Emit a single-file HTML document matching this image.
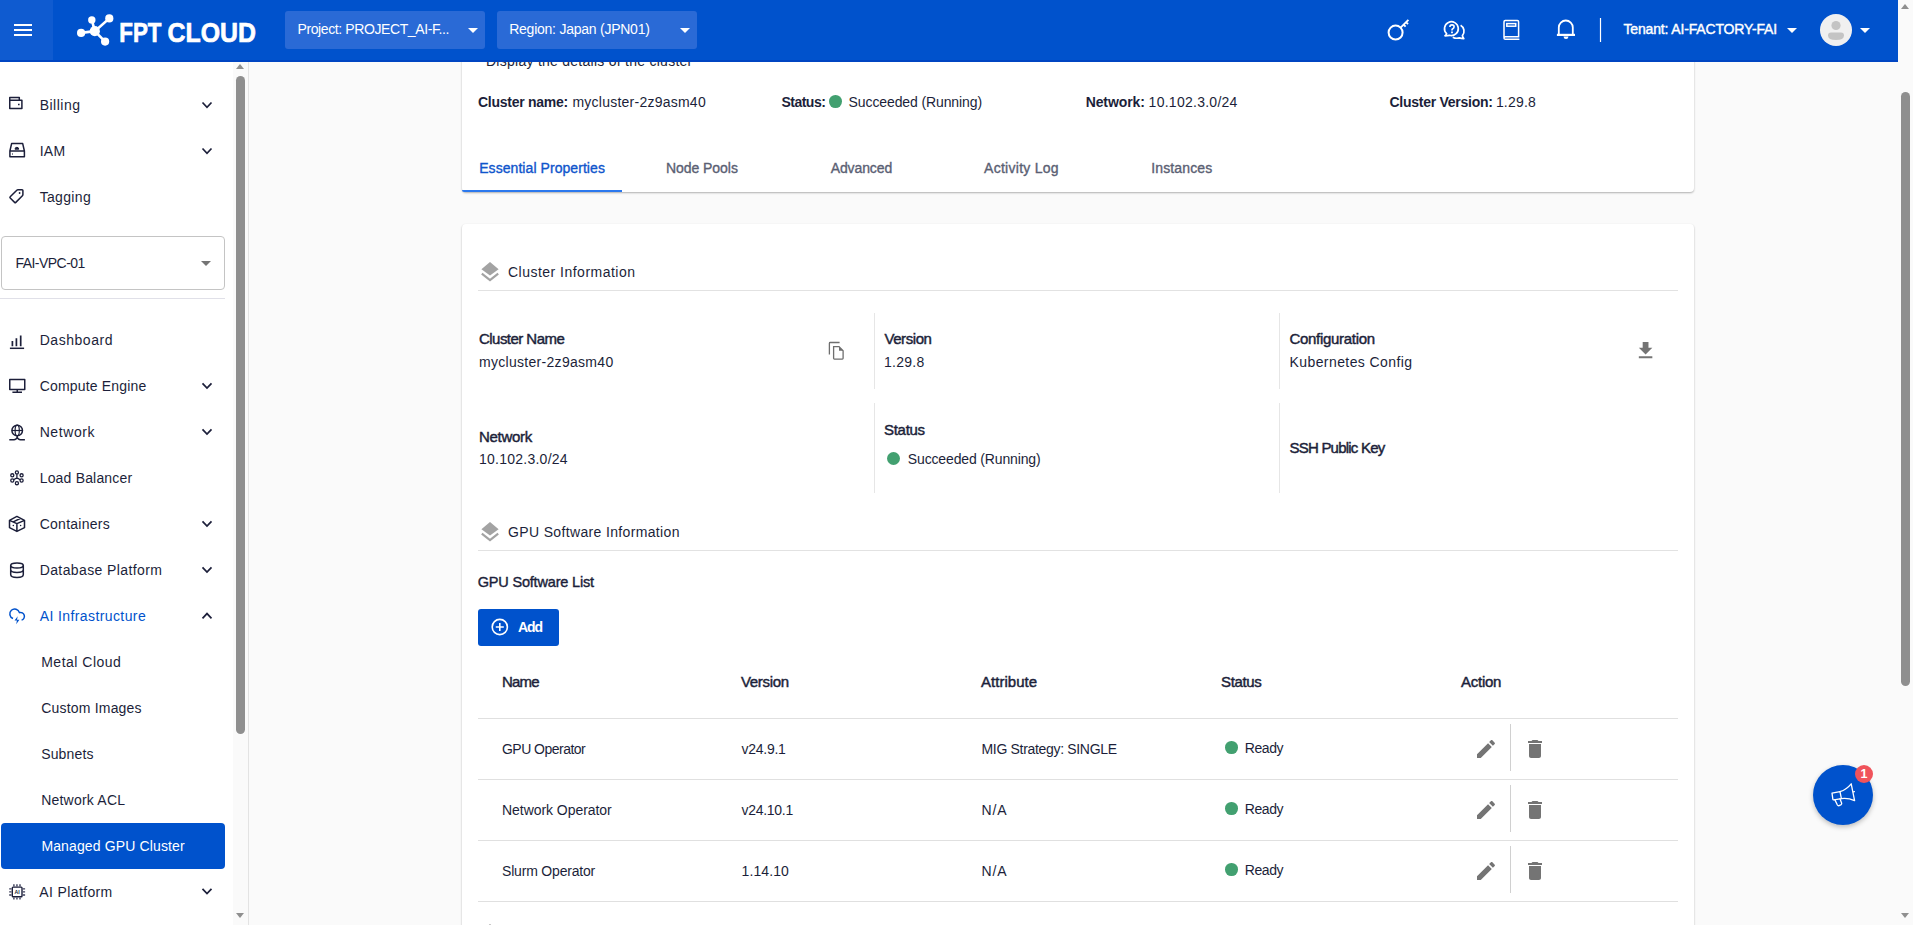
<!DOCTYPE html>
<html><head><meta charset="utf-8">
<style>
*{box-sizing:border-box}
html,body{margin:0;padding:0}
body{width:1913px;height:925px;overflow:hidden;position:relative;background:#fafafa;font-family:"Liberation Sans",sans-serif;color:#1c1f3a}
.a{position:absolute}
.nw{white-space:nowrap}
.card{position:absolute;background:#fff;border-radius:4px;box-shadow:0 1px 2px rgba(0,0,0,.3)}
</style></head>
<body>

<div class="card" style="left:462px;top:20px;width:1232px;height:172px"></div>
<div class="a nw" style="left:486px;top:52.75px;font-size:14px;line-height:16px;font-weight:normal;color:#1c1f3a;letter-spacing:0.261px;">Display the details of the cluster</div>
<div class="a nw" style="left:478px;top:94.25px;font-size:14px;line-height:16px;font-weight:bold;color:#1c1f3a;letter-spacing:-0.266px;">Cluster name:</div>
<div class="a nw" style="left:572.4px;top:94.25px;font-size:14px;line-height:16px;font-weight:normal;color:#1c1f3a;letter-spacing:0.243px;">mycluster-2z9asm40</div>
<div class="a nw" style="left:781.4px;top:94.25px;font-size:14px;line-height:16px;font-weight:bold;color:#1c1f3a;letter-spacing:-0.498px;">Status:</div>
<div class="a" style="left:829.1px;top:95.1px;width:12.8px;height:12.8px;border-radius:50%;background:#42a070"></div>
<div class="a nw" style="left:848.6px;top:94.25px;font-size:14px;line-height:16px;font-weight:normal;color:#1c1f3a;letter-spacing:-0.109px;">Succeeded (Running)</div>
<div class="a nw" style="left:1085.7px;top:94.25px;font-size:14px;line-height:16px;font-weight:bold;color:#1c1f3a;letter-spacing:-0.105px;">Network:</div>
<div class="a nw" style="left:1148.6px;top:94.25px;font-size:14px;line-height:16px;font-weight:normal;color:#1c1f3a;letter-spacing:0.263px;">10.102.3.0/24</div>
<div class="a nw" style="left:1389.5px;top:94.25px;font-size:14px;line-height:16px;font-weight:bold;color:#1c1f3a;letter-spacing:-0.267px;">Cluster Version:</div>
<div class="a nw" style="left:1495.9px;top:94.25px;font-size:14px;line-height:16px;font-weight:normal;color:#1c1f3a;letter-spacing:0.192px;">1.29.8</div>
<div class="a nw" style="left:479.2px;top:160.15px;font-size:14px;line-height:16px;font-weight:normal;color:#0f55cc;letter-spacing:0.063px;-webkit-text-stroke:0.35px #0f55cc">Essential Properties</div>
<div class="a nw" style="left:665.9px;top:160.15px;font-size:14px;line-height:16px;font-weight:normal;color:#5a6073;letter-spacing:-0.042px;-webkit-text-stroke:0.35px #5a6073">Node Pools</div>
<div class="a nw" style="left:830.7px;top:160.15px;font-size:14px;line-height:16px;font-weight:normal;color:#5a6073;letter-spacing:-0.112px;-webkit-text-stroke:0.35px #5a6073">Advanced</div>
<div class="a nw" style="left:984.1px;top:160.15px;font-size:14px;line-height:16px;font-weight:normal;color:#5a6073;letter-spacing:0.264px;-webkit-text-stroke:0.35px #5a6073">Activity Log</div>
<div class="a nw" style="left:1151.3px;top:160.15px;font-size:14px;line-height:16px;font-weight:normal;color:#5a6073;letter-spacing:0.122px;-webkit-text-stroke:0.35px #5a6073">Instances</div>
<div class="a" style="left:462px;top:190px;width:160px;height:2px;background:#2b78ee;border-bottom-left-radius:3px"></div>
<div class="card" style="left:462px;top:224px;width:1232px;height:760px"></div>
<svg class="a" style="left:480px;top:260px" width="20" height="22" viewBox="0 0 20 22"><path d="M10 2 L18.6 9.3 L10 15.4 L1.4 9.3 Z" fill="#a3a3a3"/><path d="M1.8 13.6 L10 20 L18.2 13.6" fill="none" stroke="#a3a3a3" stroke-width="2.2"/></svg>
<div class="a nw" style="left:508px;top:263.75px;font-size:14px;line-height:16px;font-weight:normal;color:#1c1f3a;letter-spacing:0.484px;">Cluster Information</div>
<div class="a" style="left:478px;top:290px;width:1200px;height:1px;background:#e2e2e2"></div>
<div class="a" style="left:874px;top:313px;width:1px;height:76px;background:#e6e6e6"></div>
<div class="a" style="left:874px;top:403px;width:1px;height:90px;background:#e6e6e6"></div>
<div class="a" style="left:1279px;top:313px;width:1px;height:76px;background:#e6e6e6"></div>
<div class="a" style="left:1279px;top:403px;width:1px;height:90px;background:#e6e6e6"></div>
<div class="a nw" style="left:479px;top:330.07px;font-size:15px;line-height:17px;font-weight:normal;color:#1c1f3a;letter-spacing:-0.541px;-webkit-text-stroke:0.45px #1c1f3a">Cluster Name</div>
<div class="a nw" style="left:479px;top:353.55px;font-size:14px;line-height:16px;font-weight:normal;color:#1c1f3a;letter-spacing:0.296px;">mycluster-2z9asm40</div>
<div class="a nw" style="left:884.4px;top:329.97px;font-size:15px;line-height:17px;font-weight:normal;color:#1c1f3a;letter-spacing:-0.415px;-webkit-text-stroke:0.45px #1c1f3a">Version</div>
<div class="a nw" style="left:884px;top:353.75px;font-size:14px;line-height:16px;font-weight:normal;color:#1c1f3a;letter-spacing:0.272px;">1.29.8</div>
<div class="a nw" style="left:1289.5px;top:329.77px;font-size:15px;line-height:17px;font-weight:normal;color:#1c1f3a;letter-spacing:-0.307px;-webkit-text-stroke:0.45px #1c1f3a">Configuration</div>
<div class="a nw" style="left:1289.5px;top:353.75px;font-size:14px;line-height:16px;font-weight:normal;color:#1c1f3a;letter-spacing:0.414px;">Kubernetes Config</div>
<div class="a nw" style="left:479px;top:427.87px;font-size:15px;line-height:17px;font-weight:normal;color:#1c1f3a;letter-spacing:-0.302px;-webkit-text-stroke:0.45px #1c1f3a">Network</div>
<div class="a nw" style="left:479px;top:451.25px;font-size:14px;line-height:16px;font-weight:normal;color:#1c1f3a;letter-spacing:0.246px;">10.102.3.0/24</div>
<div class="a nw" style="left:884px;top:420.67px;font-size:15px;line-height:17px;font-weight:normal;color:#1c1f3a;letter-spacing:-0.285px;-webkit-text-stroke:0.45px #1c1f3a">Status</div>
<div class="a" style="left:887px;top:452px;width:13px;height:13px;border-radius:50%;background:#42a070"></div>
<div class="a nw" style="left:907.8px;top:451.25px;font-size:14px;line-height:16px;font-weight:normal;color:#1c1f3a;letter-spacing:-0.142px;">Succeeded (Running)</div>
<div class="a nw" style="left:1289.5px;top:438.77px;font-size:15px;line-height:17px;font-weight:normal;color:#1c1f3a;letter-spacing:-0.783px;-webkit-text-stroke:0.45px #1c1f3a">SSH Public Key</div>
<svg class="a" style="left:820px;top:335px" width="30" height="30" viewBox="0 0 30 30"><path d="M9.4 19.5 V8.3 Q9.4 7.5 10.2 7.5 H19.6" fill="none" stroke="#6e6e6e" stroke-width="1.3"/><path d="M13.6 11.6 H19 L23.1 15.7 V23.3 Q23.1 24.1 22.3 24.1 H14.4 Q13.6 24.1 13.6 23.3 Z" fill="none" stroke="#6e6e6e" stroke-width="1.3"/><path d="M19 11.6 V15.7 H23.1 Z" fill="#6e6e6e"/></svg>
<svg class="a" style="left:1634.4px;top:339.2px" width="24" height="24" viewBox="0 0 24 24" ><path transform="scale(0.965)" d="M19 9h-4V3H9v6H5l7 7 7-7zM5 18v2h14v-2H5z" fill="#747474"/></svg>
<svg class="a" style="left:480px;top:520px" width="20" height="22" viewBox="0 0 20 22"><path d="M10 2 L18.6 9.3 L10 15.4 L1.4 9.3 Z" fill="#a3a3a3"/><path d="M1.8 13.6 L10 20 L18.2 13.6" fill="none" stroke="#a3a3a3" stroke-width="2.2"/></svg>
<div class="a nw" style="left:508px;top:524.45px;font-size:14px;line-height:16px;font-weight:normal;color:#1c1f3a;letter-spacing:0.352px;">GPU Software Information</div>
<div class="a" style="left:478px;top:550px;width:1200px;height:1px;background:#e2e2e2"></div>
<div class="a nw" style="left:477.7px;top:573.66px;font-size:14.5px;line-height:17px;font-weight:normal;color:#1c1f3a;letter-spacing:-0.183px;-webkit-text-stroke:0.4px #1c1f3a">GPU Software List</div>
<div class="a" style="left:478px;top:609px;width:81px;height:37px;background:#0052cc;border-radius:3px"></div>
<svg class="a" style="left:489px;top:617px" width="22" height="20" viewBox="0 0 22 20"><circle cx="10.8" cy="10" r="7.6" fill="none" stroke="#fff" stroke-width="1.6"/><path d="M10.8 6 V14 M6.8 10 H14.8" stroke="#fff" stroke-width="1.6"/></svg>
<div class="a nw" style="left:518px;top:619.25px;font-size:14px;line-height:16px;font-weight:bold;color:#fff;letter-spacing:-1.031px;">Add</div>
<div class="a nw" style="left:502px;top:672.97px;font-size:15px;line-height:17px;font-weight:normal;color:#1c1f3a;letter-spacing:-0.823px;-webkit-text-stroke:0.45px #1c1f3a">Name</div>
<div class="a nw" style="left:741px;top:672.97px;font-size:15px;line-height:17px;font-weight:normal;color:#1c1f3a;letter-spacing:-0.332px;-webkit-text-stroke:0.45px #1c1f3a">Version</div>
<div class="a nw" style="left:981px;top:672.97px;font-size:15px;line-height:17px;font-weight:normal;color:#1c1f3a;letter-spacing:0.023px;-webkit-text-stroke:0.45px #1c1f3a">Attribute</div>
<div class="a nw" style="left:1221px;top:672.97px;font-size:15px;line-height:17px;font-weight:normal;color:#1c1f3a;letter-spacing:-0.365px;-webkit-text-stroke:0.45px #1c1f3a">Status</div>
<div class="a nw" style="left:1461px;top:672.97px;font-size:15px;line-height:17px;font-weight:normal;color:#1c1f3a;letter-spacing:-0.249px;-webkit-text-stroke:0.45px #1c1f3a">Action</div>
<div class="a" style="left:478px;top:718px;width:1200px;height:1px;background:#e0e0e0"></div>
<div class="a" style="left:478px;top:779px;width:1200px;height:1px;background:#e0e0e0"></div>
<div class="a" style="left:478px;top:840px;width:1200px;height:1px;background:#e0e0e0"></div>
<div class="a" style="left:478px;top:901px;width:1200px;height:1px;background:#e0e0e0"></div>
<div class="a nw" style="left:502px;top:740.55px;font-size:14px;line-height:16px;font-weight:normal;color:#1c1f3a;letter-spacing:-0.528px;">GPU Operator</div>
<div class="a nw" style="left:741.6px;top:740.55px;font-size:14px;line-height:16px;font-weight:normal;color:#1c1f3a;letter-spacing:-0.273px;">v24.9.1</div>
<div class="a nw" style="left:981.5px;top:740.55px;font-size:14px;line-height:16px;font-weight:normal;color:#1c1f3a;letter-spacing:-0.319px;">MIG Strategy: SINGLE</div>
<div class="a" style="left:1225.2px;top:741.2px;width:12.6px;height:12.6px;border-radius:50%;background:#42a070"></div>
<div class="a nw" style="left:1244.8px;top:739.75px;font-size:14px;line-height:16px;font-weight:normal;color:#1c1f3a;letter-spacing:-0.417px;">Ready</div>
<svg class="a" style="left:1474px;top:736.6px" width="24" height="24" viewBox="0 0 24 24"><path d="M3 17.25V21h3.75L17.81 9.94l-3.75-3.75L3 17.25zM20.71 7.04c.39-.39.39-1.02 0-1.41l-2.34-2.34c-.39-.39-1.02-.39-1.41 0l-1.83 1.83 3.75 3.75 1.83-1.83z" fill="#747474"/></svg>
<div class="a" style="left:1510px;top:724.3px;width:1px;height:47px;background:#d0d0d0"></div>
<svg class="a" style="left:1522.9px;top:737.1px" width="24" height="24" viewBox="0 0 24 24"><path d="M6 19c0 1.1.9 2 2 2h8c1.1 0 2-.9 2-2V7H6v12zM19 4h-3.5l-1-1h-5l-1 1H5v2h14V4z" fill="#747474"/></svg>
<div class="a nw" style="left:502px;top:801.55px;font-size:14px;line-height:16px;font-weight:normal;color:#1c1f3a;letter-spacing:-0.048px;">Network Operator</div>
<div class="a nw" style="left:741.6px;top:801.55px;font-size:14px;line-height:16px;font-weight:normal;color:#1c1f3a;letter-spacing:-0.303px;">v24.10.1</div>
<div class="a nw" style="left:981.5px;top:801.55px;font-size:14px;line-height:16px;font-weight:normal;color:#1c1f3a;letter-spacing:0.9px;">N/A</div>
<div class="a" style="left:1225.2px;top:802.2px;width:12.6px;height:12.6px;border-radius:50%;background:#42a070"></div>
<div class="a nw" style="left:1244.8px;top:800.75px;font-size:14px;line-height:16px;font-weight:normal;color:#1c1f3a;letter-spacing:-0.417px;">Ready</div>
<svg class="a" style="left:1474px;top:797.6px" width="24" height="24" viewBox="0 0 24 24"><path d="M3 17.25V21h3.75L17.81 9.94l-3.75-3.75L3 17.25zM20.71 7.04c.39-.39.39-1.02 0-1.41l-2.34-2.34c-.39-.39-1.02-.39-1.41 0l-1.83 1.83 3.75 3.75 1.83-1.83z" fill="#747474"/></svg>
<div class="a" style="left:1510px;top:785.3px;width:1px;height:47px;background:#d0d0d0"></div>
<svg class="a" style="left:1522.9px;top:798.1px" width="24" height="24" viewBox="0 0 24 24"><path d="M6 19c0 1.1.9 2 2 2h8c1.1 0 2-.9 2-2V7H6v12zM19 4h-3.5l-1-1h-5l-1 1H5v2h14V4z" fill="#747474"/></svg>
<div class="a nw" style="left:502px;top:862.55px;font-size:14px;line-height:16px;font-weight:normal;color:#1c1f3a;letter-spacing:-0.187px;">Slurm Operator</div>
<div class="a nw" style="left:741.6px;top:862.55px;font-size:14px;line-height:16px;font-weight:normal;color:#1c1f3a;letter-spacing:0.079px;">1.14.10</div>
<div class="a nw" style="left:981.5px;top:862.55px;font-size:14px;line-height:16px;font-weight:normal;color:#1c1f3a;letter-spacing:0.9px;">N/A</div>
<div class="a" style="left:1225.2px;top:863.2px;width:12.6px;height:12.6px;border-radius:50%;background:#42a070"></div>
<div class="a nw" style="left:1244.8px;top:861.75px;font-size:14px;line-height:16px;font-weight:normal;color:#1c1f3a;letter-spacing:-0.417px;">Ready</div>
<svg class="a" style="left:1474px;top:858.6px" width="24" height="24" viewBox="0 0 24 24"><path d="M3 17.25V21h3.75L17.81 9.94l-3.75-3.75L3 17.25zM20.71 7.04c.39-.39.39-1.02 0-1.41l-2.34-2.34c-.39-.39-1.02-.39-1.41 0l-1.83 1.83 3.75 3.75 1.83-1.83z" fill="#747474"/></svg>
<div class="a" style="left:1510px;top:846.3px;width:1px;height:47px;background:#d0d0d0"></div>
<svg class="a" style="left:1522.9px;top:859.1px" width="24" height="24" viewBox="0 0 24 24"><path d="M6 19c0 1.1.9 2 2 2h8c1.1 0 2-.9 2-2V7H6v12zM19 4h-3.5l-1-1h-5l-1 1H5v2h14V4z" fill="#747474"/></svg>
<svg class="a" style="left:480px;top:922px" width="20" height="22" viewBox="0 0 20 22"><path d="M10 2 L18.6 9.3 L10 15.4 L1.4 9.3 Z" fill="#a3a3a3"/><path d="M1.8 13.6 L10 20 L18.2 13.6" fill="none" stroke="#a3a3a3" stroke-width="2.2"/></svg>
<div class="a" style="left:1813px;top:765px;width:60px;height:60px;border-radius:50%;background:#0052cc;box-shadow:0 2px 5px rgba(0,0,0,.25)"></div>
<svg class="a" style="left:1820px;top:775px" width="45" height="40" viewBox="1820 775 45 40"><g fill="none" stroke="#fff" stroke-width="1.3" stroke-linejoin="round" stroke-linecap="round"><path d="M1832 793.2 L1840 791.6 L1841.4 798.6 L1834 799.8 Q1832.9 800 1832.8 798.9 Z"/><path d="M1840 791.6 Q1846.5 789.6 1851.2 783.8 L1854.6 800.6 Q1848.2 797.8 1841.4 798.6"/><path d="M1834.8 799.6 L1837.4 805 Q1838 806 1839.2 805.6 L1841.2 804.6 Q1842 804 1841.6 803 L1840 798.9"/><path d="M1853.4 791.8 L1854.4 791.6"/></g></svg>
<div class="a" style="left:1855px;top:765px;width:18px;height:18px;border-radius:50%;background:#f0535b;color:#fff;font-size:12.5px;font-weight:bold;line-height:18px;text-align:center">1</div>
<div class="a" style="left:1898px;top:0;width:15px;height:925px;background:#fafafa"></div>
<div class="a" style="left:1901px;top:92px;width:9px;height:594px;border-radius:4.5px;background:#8f8f8f"></div>
<div class="a" style="left:1901px;top:4px;width:0;height:0;border-left:4.5px solid transparent;border-right:4.5px solid transparent;border-bottom:5px solid #8f8f8f"></div>
<div class="a" style="left:1901px;top:913px;width:0;height:0;border-left:4.5px solid transparent;border-right:4.5px solid transparent;border-top:5px solid #8f8f8f"></div>
<div class="a" style="left:0;top:62px;width:248px;height:863px;background:#fff"></div>
<div class="a" style="left:233px;top:62px;width:15px;height:863px;background:#fafafa"></div>
<div class="a" style="left:248px;top:62px;width:1px;height:863px;background:#e3e3e3"></div>
<div class="a" style="left:236px;top:76px;width:9px;height:658px;border-radius:4.5px;background:#8f8f8f"></div>
<div class="a" style="left:236px;top:64px;width:0;height:0;border-left:4.5px solid transparent;border-right:4.5px solid transparent;border-bottom:5px solid #8f8f8f"></div>
<div class="a" style="left:236px;top:913px;width:0;height:0;border-left:4.5px solid transparent;border-right:4.5px solid transparent;border-top:5px solid #8f8f8f"></div>
<svg class="a" style="left:0;top:84px" width="34" height="40" viewBox="0 0 34 40"><g fill="none" stroke="#1c1f3a" stroke-width="1.5" stroke-linejoin="round"><path d="M9.75 16.2 H21.9 V24.6 H9.75 Z M9.75 16.2 V13.6 H19.3 V16.2" /><path d="M18 20.6 H19.6"/></g></svg>
<div class="a nw" style="left:39.7px;top:96.95px;font-size:14px;line-height:16px;font-weight:normal;color:#1c1f3a;letter-spacing:0.489px;">Billing</div>
<svg class="a" style="left:0;top:0" width="220" height="925" ><path d="M202.5 102.5 L207 107.3 L211.5 102.5" fill="none" stroke="#1c1f3a" stroke-width="1.7"/></svg>
<svg class="a" style="left:0;top:130px" width="34" height="40" viewBox="0 0 34 40"><g fill="none" stroke="#1c1f3a" stroke-width="1.5" stroke-linejoin="round"><path d="M9.9 21 L11.6 13.6 H22.7 L24.4 21 V26.7 H9.9 Z M9.9 21 H24.4"/><path d="M12.3 24 H13"/><path d="M15 19.2 Q15 17.3 16.9 17.3 Q18.6 17.3 18.8 19.2 Z" fill="#1c1f3a" stroke-width="1"/></g></svg>
<div class="a nw" style="left:39.7px;top:142.95px;font-size:14px;line-height:16px;font-weight:normal;color:#1c1f3a;letter-spacing:0.236px;">IAM</div>
<svg class="a" style="left:0;top:0" width="220" height="925" ><path d="M202.5 148.5 L207 153.3 L211.5 148.5" fill="none" stroke="#1c1f3a" stroke-width="1.7"/></svg>
<svg class="a" style="left:0;top:176px" width="34" height="40" viewBox="0 0 34 40"><g fill="none" stroke="#1c1f3a" stroke-width="1.5" stroke-linejoin="round"><path d="M10.2 20.8 L16.8 14.2 Q17.3 13.7 18 13.7 H22.1 Q22.9 13.7 22.9 14.5 V18.6 Q22.9 19.3 22.4 19.8 L15.8 26.4 Q15.2 27 14.6 26.4 L10.2 22 Q9.6 21.4 10.2 20.8 Z"/><circle cx="19.6" cy="17" r="0.9" fill="#1c1f3a" stroke="none"/></g></svg>
<div class="a nw" style="left:39.7px;top:188.85px;font-size:14px;line-height:16px;font-weight:normal;color:#1c1f3a;letter-spacing:0.324px;">Tagging</div>
<div class="a" style="left:1px;top:236px;width:224px;height:54px;border:1px solid #c4c4c4;border-radius:4px"></div>
<div class="a nw" style="left:15.5px;top:254.95px;font-size:14px;line-height:16px;font-weight:normal;color:#1c1f3a;letter-spacing:-0.545px;">FAI-VPC-01</div>
<div class="a" style="left:201px;top:261px;width:0;height:0;border-left:5px solid transparent;border-right:5px solid transparent;border-top:5px solid #757575"></div>
<div class="a" style="left:0;top:298px;width:225px;height:1px;background:#e0e0e8"></div>
<svg class="a" style="left:0;top:320px" width="34" height="40" viewBox="0 0 34 40"><g fill="none" stroke="#1c1f3a" stroke-width="1.5" stroke-linejoin="round"><path d="M12.4 21 V26.2 M16.4 18.3 V26.2 M20.7 15.6 V26.2" stroke-width="1.7"/><path d="M9.9 28.3 H24.1" stroke-width="1.5"/></g></svg>
<div class="a nw" style="left:39.7px;top:331.75px;font-size:14px;line-height:16px;font-weight:normal;color:#1c1f3a;letter-spacing:0.537px;">Dashboard</div>
<svg class="a" style="left:0;top:366px" width="34" height="40" viewBox="0 0 34 40"><g fill="none" stroke="#1c1f3a" stroke-width="1.5" stroke-linejoin="round"><rect x="9.75" y="13.6" width="15" height="10" /><path d="M17.25 23.6 V26.2 M12.4 26.3 H22" /></g></svg>
<div class="a nw" style="left:39.7px;top:377.75px;font-size:14px;line-height:16px;font-weight:normal;color:#1c1f3a;letter-spacing:0.169px;">Compute Engine</div>
<svg class="a" style="left:0;top:0" width="220" height="925" ><path d="M202.5 383.3 L207 388.1 L211.5 383.3" fill="none" stroke="#1c1f3a" stroke-width="1.7"/></svg>
<svg class="a" style="left:0;top:412px" width="34" height="40" viewBox="0 0 34 40"><g fill="none" stroke="#1c1f3a" stroke-width="1.5" stroke-linejoin="round"><g transform="translate(0 -0.8)"><circle cx="17.2" cy="19.3" r="5.3"/><ellipse cx="17.2" cy="19.3" rx="2.1" ry="5.3" stroke-width="1.2"/><path d="M11.9 19.3 H22.5" stroke-width="1.2"/><path d="M17.2 24.6 V25.6 Q17.2 27 15.8 28 Q15.1 28.5 14 28.5 H9.3 M17.2 25.6 Q17.2 27 18.6 28 Q19.3 28.5 20.4 28.5 H24.9"/></g></svg>
<div class="a nw" style="left:39.7px;top:423.75px;font-size:14px;line-height:16px;font-weight:normal;color:#1c1f3a;letter-spacing:0.576px;">Network</div>
<svg class="a" style="left:0;top:0" width="220" height="925" ><path d="M202.5 429.3 L207 434.1 L211.5 429.3" fill="none" stroke="#1c1f3a" stroke-width="1.7"/></svg>
<svg class="a" style="left:0;top:458px" width="34" height="40" viewBox="0 0 34 40"><g fill="none" stroke="#1c1f3a" stroke-width="1.5" stroke-linejoin="round"><g stroke-width="1.3"><circle cx="16.9" cy="14.4" r="1.55"/><circle cx="12.3" cy="17.3" r="1.55"/><circle cx="21.6" cy="17.3" r="1.55"/><circle cx="12.3" cy="22.5" r="1.55"/><circle cx="21.6" cy="22.5" r="1.55"/><circle cx="16.9" cy="25.2" r="1.55"/><path d="M16.9 16 V20.2 Q15.5 20.3 13.7 21.7 M16.9 20.2 Q18.3 20.3 20.1 21.7"/></g></g></svg>
<div class="a nw" style="left:39.7px;top:469.75px;font-size:14px;line-height:16px;font-weight:normal;color:#1c1f3a;letter-spacing:0.181px;">Load Balancer</div>
<svg class="a" style="left:0;top:504px" width="34" height="40" viewBox="0 0 34 40"><g fill="none" stroke="#1c1f3a" stroke-width="1.5" stroke-linejoin="round"><path d="M16.9 12.4 L24.5 16.4 V23.6 L16.9 27.4 L9.5 23.6 V16.4 Z M9.5 16.4 L16.9 19.6 L24.5 16.4 M16.9 19.6 V27.4 M13.2 17.9 L20.7 14.3"/><circle cx="13.3" cy="21.6" r="0.75" fill="#1c1f3a" stroke="none"/><circle cx="20.6" cy="21.6" r="0.75" fill="#1c1f3a" stroke="none"/></g></svg>
<div class="a nw" style="left:39.7px;top:515.75px;font-size:14px;line-height:16px;font-weight:normal;color:#1c1f3a;letter-spacing:0.255px;">Containers</div>
<svg class="a" style="left:0;top:0" width="220" height="925" ><path d="M202.5 521.3 L207 526.1 L211.5 521.3" fill="none" stroke="#1c1f3a" stroke-width="1.7"/></svg>
<svg class="a" style="left:0;top:550px" width="34" height="40" viewBox="0 0 34 40"><g fill="none" stroke="#1c1f3a" stroke-width="1.5" stroke-linejoin="round"><ellipse cx="17" cy="15.5" rx="6.3" ry="2.5"/><path d="M10.7 15.5 V24.4 Q10.7 27.4 17 27.4 Q23.3 27.4 23.3 24.4 V15.5 M10.7 19.8 Q10.7 22.5 17 22.5 Q23.3 22.5 23.3 19.8"/></g></svg>
<div class="a nw" style="left:39.7px;top:561.75px;font-size:14px;line-height:16px;font-weight:normal;color:#1c1f3a;letter-spacing:0.389px;">Database Platform</div>
<svg class="a" style="left:0;top:0" width="220" height="925" ><path d="M202.5 567.3 L207 572.1 L211.5 567.3" fill="none" stroke="#1c1f3a" stroke-width="1.7"/></svg>
<svg class="a" style="left:0;top:596px" width="34" height="40" viewBox="0 0 34 40"><g fill="none" stroke="#1c1f3a" stroke-width="1.5" stroke-linejoin="round"><path d="M13.0 22.5 A4.9 4.9 0 1 1 19.43 16.63 A3.85 3.85 0 1 1 21.6 24.1" stroke="#0052cc" stroke-width="1.5"/><path d="M17.7 20.2 L14.5 24.5 H16.9 L16.2 28.3 L19.4 23.8 H17 Z" fill="#0052cc" stroke="none"/></g></svg>
<div class="a nw" style="left:39.7px;top:607.75px;font-size:14px;line-height:16px;font-weight:normal;color:#0052cc;letter-spacing:0.4px;">AI Infrastructure</div>
<svg class="a" style="left:0;top:0" width="220" height="925" ><path d="M202.5 618.4 L207 613.6 L211.5 618.4" fill="none" stroke="#1c1f3a" stroke-width="1.7"/></svg>
<div class="a nw" style="left:41.2px;top:653.75px;font-size:14px;line-height:16px;font-weight:normal;color:#1c1f3a;letter-spacing:0.498px;">Metal Cloud</div>
<div class="a nw" style="left:41.2px;top:699.75px;font-size:14px;line-height:16px;font-weight:normal;color:#1c1f3a;letter-spacing:0.197px;">Custom Images</div>
<div class="a nw" style="left:41.2px;top:745.75px;font-size:14px;line-height:16px;font-weight:normal;color:#1c1f3a;letter-spacing:0.155px;">Subnets</div>
<div class="a nw" style="left:41.2px;top:791.75px;font-size:14px;line-height:16px;font-weight:normal;color:#1c1f3a;letter-spacing:0.212px;">Network ACL</div>
<div class="a" style="left:1px;top:823px;width:224px;height:46px;border-radius:4px;background:#0052cc"></div>
<div class="a nw" style="left:41.4px;top:837.75px;font-size:14px;line-height:16px;font-weight:normal;color:#fff;letter-spacing:0.135px;">Managed GPU Cluster</div>
<svg class="a" style="left:0;top:871px" width="34" height="40" viewBox="0 0 34 40"><g fill="none" stroke="#1c1f3a" stroke-width="1.5" stroke-linejoin="round"><rect x="12.3" y="16.1" width="9.7" height="9.7" rx="0.8" stroke-width="1.4"/><path d="M13.9 13.3 V15.4 M16.95 13.3 V15.4 M20 13.3 V15.4 M13.9 26.5 V28.6 M16.95 26.5 V28.6 M20 26.5 V28.6 M9.2 17.9 H11.5 M9.2 20.9 H11.5 M9.2 24 H11.5 M22.8 17.9 H25.1 M22.8 20.9 H25.1 M22.8 24 H25.1" stroke-width="1.4" stroke="#3a3d58"/><text x="17.2" y="22.7" font-size="5.2" font-family="Liberation Sans" font-weight="bold" fill="#1c1f3a" stroke="none" text-anchor="middle">AI</text></g></svg>
<div class="a nw" style="left:39.3px;top:883.75px;font-size:14px;line-height:16px;font-weight:normal;color:#1c1f3a;letter-spacing:0.372px;">AI Platform</div>
<svg class="a" style="left:0;top:0" width="220" height="925" ><path d="M202.5 888.8 L207 893.6 L211.5 888.8" fill="none" stroke="#1c1f3a" stroke-width="1.7"/></svg>
<div class="a" style="left:0;top:0;width:1898px;height:62px;background:#0052cc;border-bottom:2px solid #0045c2"></div>
<div class="a" style="left:0;top:0;width:53px;height:60px;background:#0f5bd0"></div>
<div class="a" style="left:14px;top:24px;width:18px;height:2px;background:#fff"></div>
<div class="a" style="left:14px;top:29px;width:18px;height:2px;background:#fff"></div>
<div class="a" style="left:14px;top:34px;width:18px;height:2px;background:#fff"></div>
<svg class="a" style="left:76px;top:14px" width="190" height="34" viewBox="0 0 190 34">
  <g stroke="#fff" fill="#fff">
    <line x1="18.8" y1="17.2" x2="5.1" y2="18.9" stroke-width="2.8"/>
    <line x1="18.8" y1="17.2" x2="15.8" y2="5.9" stroke-width="2.6"/>
    <line x1="18.8" y1="17.2" x2="33.3" y2="4.4" stroke-width="2.6"/>
    <line x1="18.8" y1="17.2" x2="29.1" y2="27.6" stroke-width="2.6"/>
    <circle cx="18.8" cy="17.2" r="5.1" stroke="none"/>
    <circle cx="15.8" cy="5.9" r="3.7" stroke="none"/>
    <circle cx="33.3" cy="4.4" r="4.1" stroke="none"/>
    <circle cx="5.1" cy="18.9" r="4.1" stroke="none"/>
    <circle cx="29.1" cy="27.6" r="4.1" stroke="none"/>
  </g>
  <g fill="#fff" stroke="#fff" stroke-width="0.7" font-family="Liberation Sans" font-weight="bold" font-size="27.6">
  <text x="43.3" y="27.8" textLength="42.2" lengthAdjust="spacingAndGlyphs">FPT</text>
  <text x="91.6" y="27.8" textLength="88.4" lengthAdjust="spacingAndGlyphs">CLOUD</text>
  </g>
</svg>
<div class="a" style="left:285px;top:11px;width:200px;height:38px;background:#2a6ad6;border-radius:3px"></div>
<div class="a" style="left:468px;top:28px;width:0;height:0;border-left:5px solid transparent;border-right:5px solid transparent;border-top:5px solid #fff"></div>
<div class="a" style="left:497px;top:11px;width:200px;height:38px;background:#2a6ad6;border-radius:3px"></div>
<div class="a" style="left:680px;top:28px;width:0;height:0;border-left:5px solid transparent;border-right:5px solid transparent;border-top:5px solid #fff"></div>
<div class="a nw" style="left:297.5px;top:20.55px;font-size:14px;line-height:16px;font-weight:normal;color:#fff;letter-spacing:-0.398px;">Project: PROJECT_AI-F...</div>
<div class="a nw" style="left:509.2px;top:20.55px;font-size:14px;line-height:16px;font-weight:normal;color:#fff;letter-spacing:-0.243px;">Region: Japan (JPN01)</div>
<svg class="a" style="left:1370px;top:0" width="280" height="62" viewBox="1370 0 280 62">
 <g fill="none" stroke="#fff" stroke-width="2" stroke-linecap="butt">
  <circle cx="1395.6" cy="32.6" r="7"/>
  <path d="M1400.6 27.6 L1408.4 19.8 M1403.6 24.6 L1405.6 26.6 M1406 22.2 L1408 24.2" stroke-width="1.9"/>
 </g>
 <g fill="none" stroke="#fff" stroke-width="1.7" stroke-linejoin="round">
  <path d="M1446.6 33.6 A6.9 6.9 0 1 1 1449.6 35.3 Q1447.5 35.6 1445 35.8 Q1446.3 34.9 1446.6 33.6 Z"/>
  <path d="M1460.6 25.2 A6.9 6.9 0 0 1 1462.4 35.6 Q1462.6 37.3 1463.8 38.6 Q1461 38.6 1459.4 37.9 Q1455.8 38.9 1452.8 37.2"/>
 </g>
 <path d="M1449.9 27 Q1449.9 24.9 1452 24.9 Q1454.1 24.9 1454.1 26.8 Q1454.1 28.1 1452.8 28.7 Q1452 29.1 1452 30.1 V30.6" fill="none" stroke="#fff" stroke-width="1.6"/>
 <rect x="1451.1" y="31.5" width="1.8" height="1.7" fill="#fff"/>
 <g fill="none" stroke="#fff" stroke-width="1.5">
  <path d="M1504 37.5 V21.8 Q1504 20.6 1505.2 20.6 H1517.4 Q1518.6 20.6 1518.6 21.8 V36.8 H1505.3 Q1504 36.8 1504 38 Q1504 39.3 1505.3 39.3 H1519.4"/>
  <rect x="1506.8" y="23.6" width="8.9" height="2.6"/>
 </g>
 <g fill="none" stroke="#fff" stroke-width="1.8">
  <path d="M1558.8 34.3 V27.5 A7 7 0 0 1 1572.8 27.5 V34.3"/>
  <path d="M1556.9 34.9 H1575" stroke-width="2.2"/>
 </g>
 <path d="M1563.5 36.4 H1568.5 Q1568.3 38.9 1566 38.9 Q1563.7 38.9 1563.5 36.4 Z" fill="#fff"/>
 <path d="M1600.5 18 V42" stroke="#fff" stroke-width="1.2"/>
</svg>
<div class="a nw" style="left:1623.5px;top:20.95px;font-size:14px;line-height:16px;font-weight:normal;color:#fff;letter-spacing:-0.158px;-webkit-text-stroke:0.4px #fff">Tenant: AI-FACTORY-FAI</div>
<div class="a" style="left:1786.6px;top:27.7px;width:0;height:0;border-left:5px solid transparent;border-right:5px solid transparent;border-top:5.5px solid #fff"></div>
<div class="a" style="left:1820px;top:14px;width:32px;height:32px;border-radius:50%;background:#f0f0f0"></div>
<svg class="a" style="left:1820px;top:14px" width="32" height="32" viewBox="0 0 32 32"><circle cx="16" cy="11.5" r="4.6" fill="#c4c4c4"/><path d="M8 21.5 Q8 18.6 11 18.6 H21 Q24 18.6 24 21.5 Q24 26 16 26 Q8 26 8 21.5 Z" fill="#c4c4c4"/></svg>
<div class="a" style="left:1859.5px;top:27.5px;width:0;height:0;border-left:5px solid transparent;border-right:5px solid transparent;border-top:5.5px solid #fff"></div>
</body></html>
